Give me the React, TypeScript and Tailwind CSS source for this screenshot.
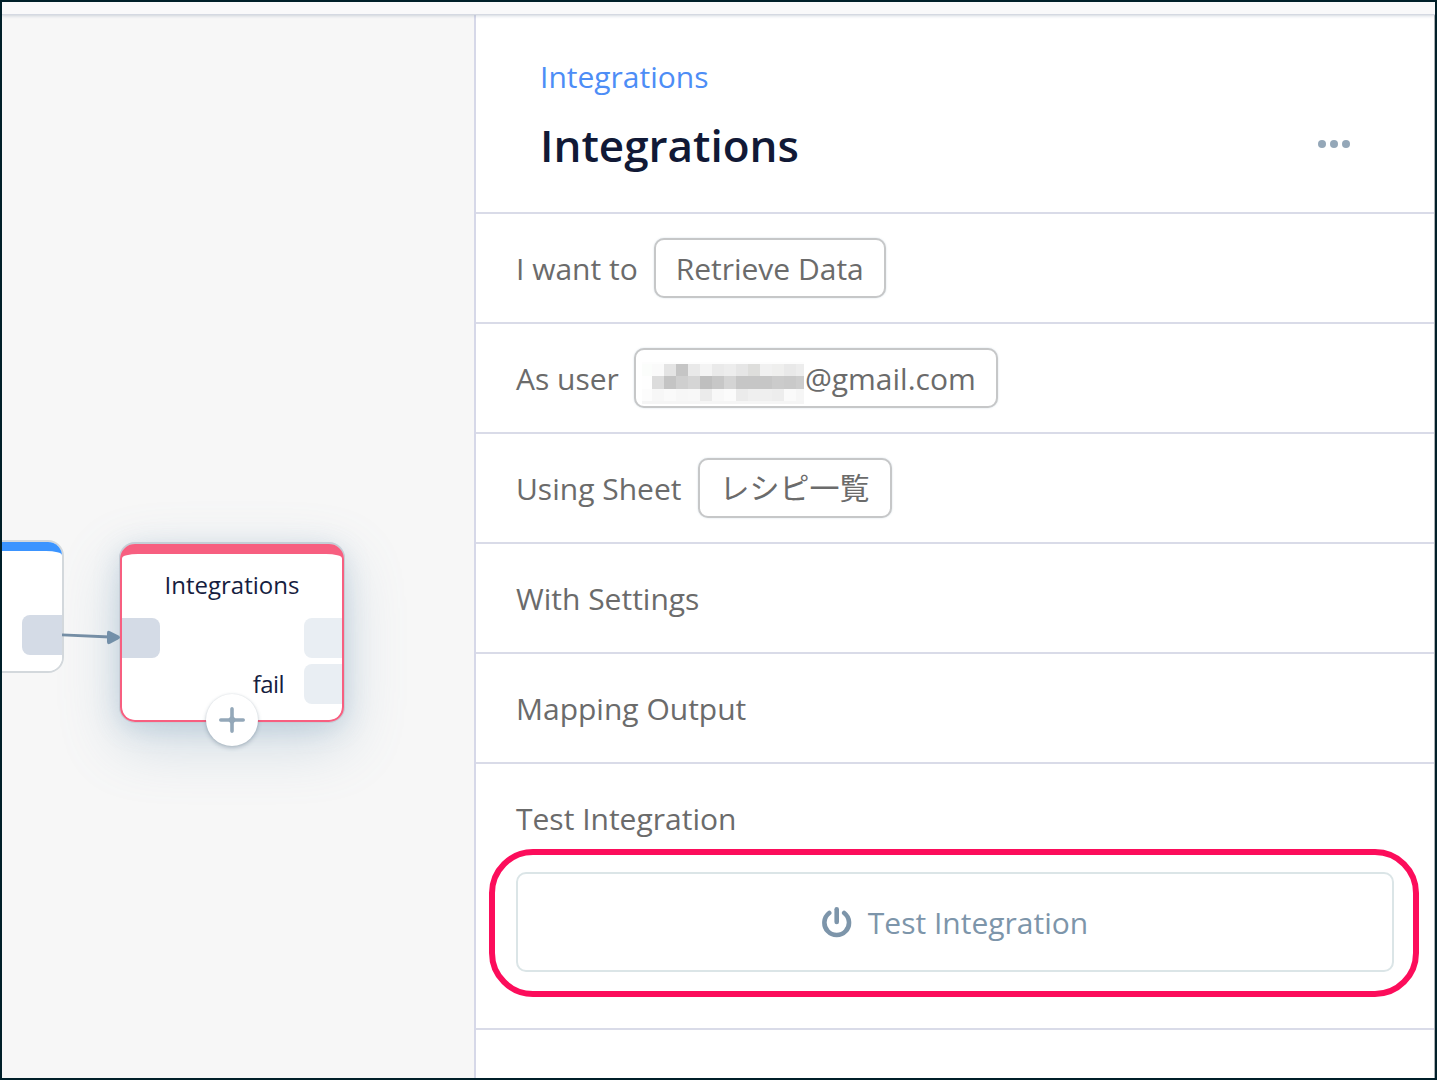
import React from "react";

const FONT = "font-['Open_Sans','Noto_Sans_CJK_JP',sans-serif]";

const MOSAIC_COLUMNS = "10.3px repeat(12, 12px) 7.7px";

const MOSAIC_ROWS: string[][] = [
  ["#fbfdfb", "#fafafa", "#e4e4e4", "#c5c5c5", "#e9e9e9", "#f4f4f4", "#eaeaea", "#ededed", "#e6e6e6", "#dededc", "#f1f1f1", "#efefee", "#e9e9e9", "#ededed"],
  ["#fefefe", "#dcdcdc", "#c4c4c4", "#cfcfcf", "#d5d5d5", "#bfbfbf", "#c7c7c7", "#d4d4d4", "#c6c6c6", "#c6c6c6", "#c6c6c6", "#cbcbcb", "#c9c9c9", "#cdcdcd"],
  ["#fcfcfc", "#f7f7f7", "#fafafa", "#f7f7f7", "#f8f8f8", "#ebebeb", "#f8f8f8", "#fbfbfb", "#ebebeb", "#efefef", "#efefef", "#ededed", "#fafafa", "#f6f6f6"],
];

function Mosaic() {
  return (
    <span className="mt-[10px] mr-[1px] block h-[42px] w-[162px] bg-[#f5f5f5]" aria-hidden="true">
      <span className="block h-[2px] bg-[#fdfdfd]" />
      {MOSAIC_ROWS.map((row, y) => (
        <span key={y} className="grid h-[12.3px]" style={{ gridTemplateColumns: MOSAIC_COLUMNS }}>
          {row.map((color, x) => (
            <span key={x} style={{ backgroundColor: color }} />
          ))}
        </span>
      ))}
    </span>
  );
}

function Chip({ className, children }: { className: string; children: React.ReactNode }) {
  return (
    <button
      className={`flex h-[60px] shrink-0 items-center rounded-[10px] border-2 border-[#c6c7c8] bg-white whitespace-nowrap shadow-[0_0_2px_rgba(150,175,190,0.4)] ${className}`}
    >
      {children}
    </button>
  );
}

function Row({ label, children }: { label: string; children?: React.ReactNode }) {
  return (
    <div className="flex h-[110px] items-center border-b-2 border-[#d9dbe8] pl-10 text-[30px] text-[#6b6b6b]">
      <span className="whitespace-nowrap">{label}</span>
      {children}
    </div>
  );
}

function PowerIcon() {
  return (
    <svg width="30" height="32" viewBox="0 0 30 32" fill="none" stroke="#7d95aa" strokeLinecap="round">
      <path d="M7.2 7A12.3 12.3 0 1 0 22.2 7" strokeWidth="4.6" />
      <path d="M14.7 3.3V15.9" strokeWidth="4.6" />
    </svg>
  );
}

function Canvas() {
  return (
    <section className="relative w-[472px] shrink-0 overflow-hidden bg-[#f7f7f7]">
      <div className="absolute top-[530px] left-[118px] h-[178px] w-[224px] rounded-[15px] shadow-[0_0_0_1px_#c5ced6,0_-1px_0_1px_#c5ced6,0_20px_60px_rgba(110,150,180,0.3),0_5px_26px_rgba(110,150,185,0.26)]">
        <div className="relative h-full overflow-hidden rounded-[15px] border-2 border-[#f75f80] bg-[#f75f80]">
          <div className="mt-[8px] h-[166px] rounded-t-[16px_4px] rounded-b-[12px] bg-white text-[24px] text-[#161d40]">
            <div className="pt-[13px] text-center leading-[36px]">Integrations</div>
          </div>
          <div className="absolute top-[71.5px] left-0 h-10 w-[38px] rounded-r-lg bg-[#d4dbe6]" />
          <div className="absolute top-[71.5px] right-0 h-10 w-[38px] rounded-l-lg bg-[#e9eef3]" />
          <div className="absolute top-[118px] right-0 flex h-10 items-center gap-[20px]">
            <span className="text-[24px] tracking-[-0.6px] text-[#161d40]">fail</span>
            <span className="h-10 w-[38px] rounded-l-lg bg-[#e9eef3]" />
          </div>
        </div>
      </div>
      <div className="absolute top-[526px] left-[-120px] h-[132.5px] w-[182px] overflow-hidden rounded-[16px] border-2 border-[#d3d8dc] bg-white">
        <div className="h-6 bg-[#3b94ff]" />
        <div className="-mt-[15px] h-[120px] rounded-tr-[16px_4px] bg-white" />
        <div className="absolute top-[73px] right-0 h-10 w-10 rounded-l-lg bg-[#d4dbe6]" />
      </div>
      <svg className="absolute top-[610px] left-[60px]" width="60" height="24" viewBox="0 0 60 24">
        <path d="M0 10.8L48 13" stroke="#758ea5" strokeWidth="2.8" />
        <path d="M45 9Q45 6 48 7.2L56 11.3Q60 13.5 56 15.6L48 19.8Q45 21 45 18Z" fill="#7390a9" />
      </svg>
      <div className="absolute top-[680px] left-[204px] flex size-[52px] items-center justify-center rounded-full bg-white shadow-[0_2px_4px_rgba(60,85,110,0.3),0_0_2px_rgba(60,85,110,0.15)]">
        <svg width="28" height="28" viewBox="0 0 28 28" fill="#94a8b9">
          <path d="M12.2 2.8Q12.4 1 14 1Q15.6 1 15.8 2.8V10.6Q16 12 17.4 12.2H25.2Q27 12.4 27 14Q27 15.6 25.2 15.8H17.4Q16 16 15.8 17.4V25.2Q15.6 27 14 27Q12.4 27 12.2 25.2V17.4Q12 16 10.6 15.8H2.8Q1 15.6 1 14Q1 12.4 2.8 12.2H10.6Q12 12 12.2 10.6Z" />
        </svg>
      </div>
    </section>
  );
}

export default function App() {
  return (
    <div className={`flex h-[1080px] w-[1437px] flex-col overflow-hidden border-2 border-[#001f29] bg-white ${FONT}`}>
      <div className="relative z-10 h-[12px] shrink-0 bg-[#f9f9fa] shadow-[0_1px_1px_#d5d9e2,0_2px_3px_rgba(90,110,140,0.25)]" />
      <div className="flex min-h-0 flex-1">
        <Canvas />
        <main className="flex flex-1 flex-col border-r border-l-2 border-r-[#a9afb2] border-l-[#d6d8e8]">
          <header className="h-[200px] shrink-0 border-b-2 border-[#d9dbe8] pt-[42px] pr-[84px] pl-16">
            <a className="block text-[30px] leading-[42px] text-[#4d8df6]">Integrations</a>
            <div className="mt-[15px] flex items-center justify-between">
              <h1 className="text-[44px] leading-[64px] font-semibold text-[#111936]">Integrations</h1>
              <div className="-mt-[2px] flex gap-1">
                <span className="size-2 rounded-full bg-[#94a7b8]" />
                <span className="size-2 rounded-full bg-[#94a7b8]" />
                <span className="size-2 rounded-full bg-[#94a7b8]" />
              </div>
            </div>
          </header>
          <Row label="I want to">
            <Chip className="ml-[16px] w-[232px] justify-center">Retrieve Data</Chip>
          </Row>
          <Row label="As user">
            <Chip className="ml-[15px] w-[364px] pl-[6px]">
              <Mosaic />
              <span>@gmail.com</span>
            </Chip>
          </Row>
          <Row label="Using Sheet">
            <Chip className="ml-[17px] w-[194px] pl-[19px]">
              <span className="-mt-px">レシピ一覧</span>
            </Chip>
          </Row>
          <Row label="With Settings" />
          <Row label="Mapping Output" />
          <section className="relative h-[266px] shrink-0 border-b-2 border-[#d9dbe8] px-10 pt-[32px] text-[30px] text-[#6b6b6b]">
            <div className="leading-[46px]">Test Integration</div>
            <button className="mt-[30px] flex h-[100px] w-full items-center justify-center gap-4 rounded-[10px] border-2 border-[#dbe5e7] text-[#7d95aa]">
              <PowerIcon />
              <span>Test Integration</span>
            </button>
            <div className="pointer-events-none absolute top-[85px] left-[13px] h-[148px] w-[930px] rounded-[44px] border-[6px] border-[#fc0d5b]" />
          </section>
        </main>
      </div>
    </div>
  );
}
